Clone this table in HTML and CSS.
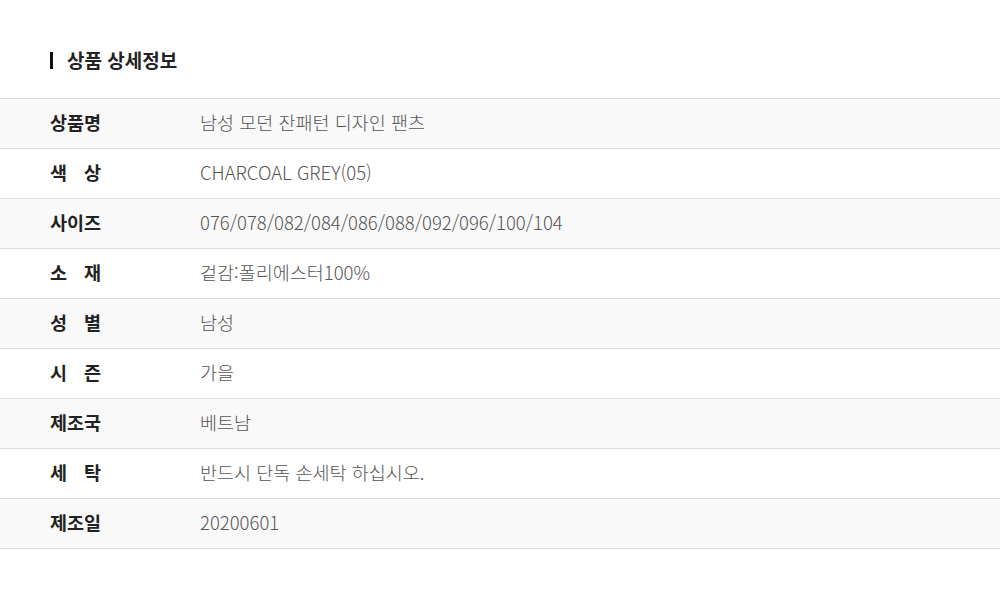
FILE: index.html
```html
<!DOCTYPE html>
<html lang="ko">
<head>
    <meta charset="UTF-8">
    <meta name="viewport" content="width=device-width, initial-scale=1.0">
    <title>상품 상세정보</title>
    <link rel="stylesheet" href="styles.css">
</head>
<body>
    <h2 class="info-title">상품 상세정보</h2>

    <table class="info-table">
        <tr>
            <th>상품명</th>
            <td>남성 모던 잔패턴 디자인 팬츠</td>
        </tr>
        <tr>
            <th><span class="wide">색상</span></th>
            <td>CHARCOAL GREY(05)</td>
        </tr>
        <tr>
            <th>사이즈</th>
            <td>076/078/082/084/086/088/092/096/100/104</td>
        </tr>
        <tr>
            <th><span class="wide">소재</span></th>
            <td>겉감:폴리에스터100%</td>
        </tr>
        <tr>
            <th><span class="wide">성별</span></th>
            <td>남성</td>
        </tr>
        <tr>
            <th><span class="wide">시즌</span></th>
            <td>가을</td>
        </tr>
        <tr>
            <th>제조국</th>
            <td>베트남</td>
        </tr>
        <tr>
            <th><span class="wide">세탁</span></th>
            <td>반드시 단독 손세탁 하십시오.</td>
        </tr>
        <tr>
            <th>제조일</th>
            <td>20200601</td>
        </tr>
    </table>
</body>
</html>
```

FILE: styles.css
```css
body {
    margin: 0;
    background: #fff;
    font-family: "Noto Sans CJK KR", "Noto Sans", sans-serif;
    color: #222;
}
.info-title {
    margin: 0;
    padding: 47px 0 0 50px;
    height: 50px;
    box-sizing: border-box;
    display: flex;
    align-items: flex-start;
    gap: 14px;
    font-size: 19px;
    line-height: 26px;
    font-weight: 700;
}
.info-title::before {
    content: "";
    width: 3px;
    height: 17px;
    margin-top: 5px;
    background: #111;
}
.info-table {
    width: 100%;
    margin-top: 48px;
    border-collapse: collapse;
    border-top: 1px solid #ddd;
}
.info-table tr {
    height: 50px;
    border-bottom: 1px solid #ddd;
}
.info-table tr:nth-child(odd) {
    background: #f9f9f9;
}
.info-table th,
.info-table td {
    padding: 0 0 4px;
    line-height: 24px;
}
.info-table th {
    width: 150px;
    padding-left: 50px;
    text-align: left;
    font-size: 18.5px;
    font-weight: 700;
    color: #222;
}
.info-table th .wide {
    letter-spacing: 17px;
}
.info-table td {
    font-size: 18.5px;
    font-weight: 300;
    color: #555;
}
```
